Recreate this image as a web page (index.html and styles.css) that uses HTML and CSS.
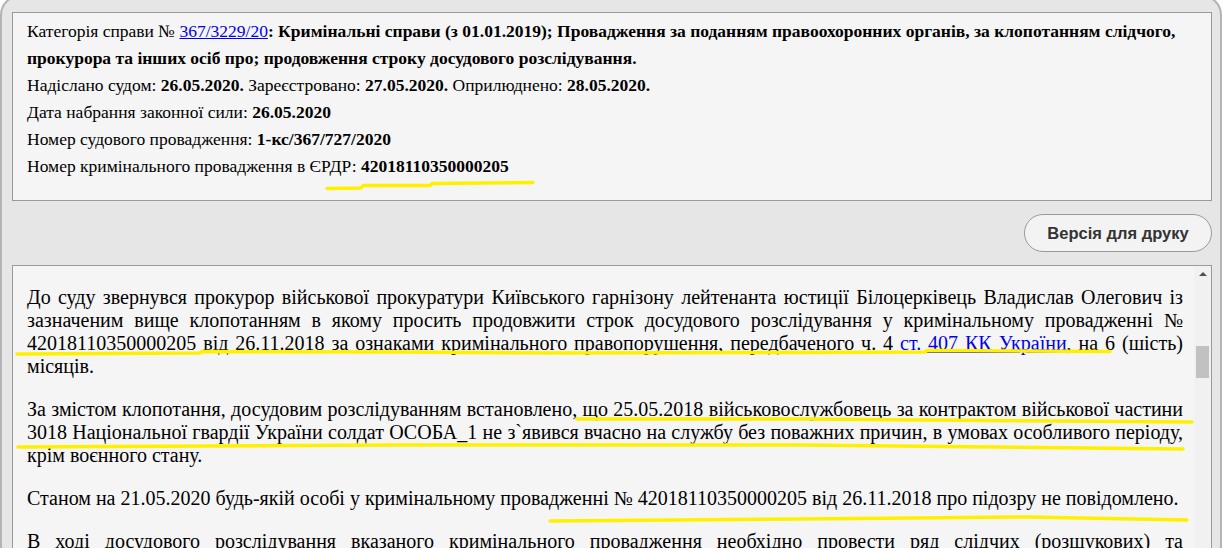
FILE: index.html
```html
<!DOCTYPE html>
<html lang="uk">
<head>
<meta charset="utf-8">
<title>Справа 367/3229/20</title>
<link rel="stylesheet" href="styles.css">
</head>
<body>
<div class="wrap">
  <div class="info">
    <div class="row">Категорія справи № <a class="case-link" href="#">367/3229/20</a><b>: Кримінальні справи (з 01.01.2019); Провадження за поданням правоохоронних органів, за клопотанням слідчого, прокурора та інших осіб про; продовження строку досудового розслідування.</b></div>
    <div class="row">Надіслано судом: <b>26.05.2020.</b> Зареєстровано: <b>27.05.2020.</b> Оприлюднено: <b>28.05.2020.</b></div>
    <div class="row">Дата набрання законної сили: <b>26.05.2020</b></div>
    <div class="row">Номер судового провадження: <b>1-кс/367/727/2020</b></div>
    <div class="row">Номер кримінального провадження в ЄРДР: <b>42018110350000205</b></div>
  </div>
  <div class="actions">
    <button class="print-btn" type="button">Версія для друку</button>
  </div>
  <div class="doc">
    <div class="doc-text">
      <p>До суду звернувся прокурор військової прокуратури Київського гарнізону лейтенанта юстиції Білоцерківець Владислав Олегович із зазначеним вище клопотанням в якому просить продовжити строк досудового розслідування у кримінальному провадженні № 42018110350000205 від 26.11.2018 за ознаками кримінального правопорушення, передбаченого ч. 4 <a class="law-link" href="#">ст. 407 КК України</a>, на 6 (шість) місяців.</p>
      <p>За змістом клопотання, досудовим розслідуванням встановлено, що 25.05.2018 військовослужбовець за контрактом військової частини 3018 Національної гвардії України солдат ОСОБА_1 не з`явився вчасно на службу без поважних причин, в умовах особливого періоду, крім воєнного стану.</p>
      <p>Станом на 21.05.2020 будь-якій особі у кримінальному провадженні № 42018110350000205 від 26.11.2018 про підозру не повідомлено.</p>
      <p>В ході досудового розслідування вказаного кримінального провадження необхідно провести ряд слідчих (розшукових) та процесуальних&nbsp;дій, спрямованих на встановлення місцезнаходження ОСОБА_1 та збирання доказів.</p>
    </div>
    <div class="scrollbar">
      <span class="sb-arrow"></span>
      <span class="sb-thumb"></span>
    </div>
  </div>
</div>
<svg class="marks" width="1227" height="548" viewBox="0 0 1227 548">
  <g fill="none" stroke="#fff000" stroke-width="3.5" stroke-linecap="round" stroke-linejoin="round">
    <polyline points="327,188.5 361,188 363,185.5 430,185.5 432,183.5 533,182.5"/>
    <polyline points="17,354 200,353 202,351.5 400,352 560,353 800,352.5 925,352 927,350.5 1110,351.5"/>
    <polyline points="577,419 800,419 1192,422"/>
    <polyline points="18,447 400,445 800,445 1183,449"/>
    <polyline points="550,521 800,519 1030,517 1187,520"/>
  </g>
</svg>
</body>
</html>
```

FILE: styles.css
```css
html, body {
  margin: 0;
  padding: 0;
  height: 548px;
  overflow: hidden;
  background: #ffffff;
}

body {
  position: relative;
  font-family: "Liberation Serif", "Times New Roman", serif;
  color: #000;
}

.wrap {
  margin: -5px 5px 0 0;
  border: 2px solid #b4b4b4;
  border-radius: 20px;
  background: #e6e6e6;
  padding: 15px 8px 0 10px;
  height: 700px;
}

.info {
  border: 1px solid #9a9a9a;
  background: #f5f5f5;
  padding: 5px 14px 20px 14px;
  font-size: 17.5px;
  line-height: 27px;
}

.case-link,
.law-link {
  color: #0000ee;
  text-decoration: underline;
}

.actions {
  display: flex;
  justify-content: flex-end;
  padding: 13px 0;
}

.print-btn {
  width: 188px;
  height: 38px;
  border: 1px solid #9a9a9a;
  border-radius: 19px;
  background: #f3f3f3;
  color: #333;
  font-family: "Liberation Sans", Arial, sans-serif;
  font-weight: bold;
  font-size: 16.5px;
  padding: 0;
}

.doc {
  display: flex;
  border: 1px solid #9a9a9a;
  background: #f5f5f5;
  height: 400px;
  overflow: hidden;
}

.doc-text {
  flex: 1;
  padding: 0 11px 0 14px;
  font-size: 20px;
  line-height: 23px;
  text-align: justify;
}

.doc-text p {
  margin: 20px 0;
}

.scrollbar {
  width: 17px;
  flex: none;
  background: #f1f1f1;
  display: flex;
  flex-direction: column;
  align-items: center;
}

.sb-arrow {
  width: 0;
  height: 0;
  margin-top: 6px;
  border-left: 4px solid transparent;
  border-right: 4px solid transparent;
  border-bottom: 4px solid #505050;
}

.sb-thumb {
  width: 13px;
  height: 32px;
  margin-top: 70px;
  background: #c1c1c1;
}

.marks {
  position: absolute;
  left: 0;
  top: 0;
  pointer-events: none;
}
```
